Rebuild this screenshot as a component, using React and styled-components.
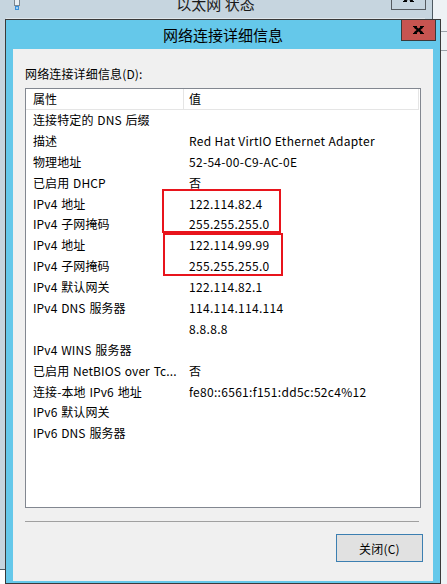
import React from "react";
import styled, { createGlobalStyle } from "styled-components";

const Global = createGlobalStyle`
  html, body { margin: 0; padding: 0; }
  body {
    width: 447px;
    height: 584px;
    overflow: hidden;
    background: #ffffff;
    font-family: "Noto Sans CJK SC", "Noto Sans", sans-serif;
    color: #000;
  }
  * { box-sizing: border-box; }
`;

const Desktop = styled.div`
  position: relative;
  width: 447px;
  height: 584px;
  overflow: hidden;
  background: #ffffff;
`;

const SideWindow = styled.div`
  position: absolute;
  left: 433px;
  top: 0;
  width: 14px;
  height: 584px;
  background: #eef2f5;
  display: flex;
  flex-direction: column;
  gap: 18px;
  padding-top: 31px;
`;

const SideLine = styled.div`
  height: 1px;
  background: #9aa3aa;
`;

const Window = styled.div`
  position: absolute;
  left: ${(p) => p.$x}px;
  top: ${(p) => p.$y}px;
  width: ${(p) => p.$w}px;
  height: ${(p) => p.$h}px;
  border: 1px solid ${(p) => (p.$active ? "#3a3a3a" : "#4e5a62")};
  background: ${(p) => (p.$active ? "#65c8ea" : "#c6d5df")};
  padding: 0 7px ${(p) => (p.$active ? 2 : 7)}px 7px;
  display: flex;
  flex-direction: column;
`;

const TitleBar = styled.div`
  height: 29px;
  flex: none;
  display: grid;
  grid-template-columns: 1fr auto 1fr;
  align-items: center;
`;

const AppIcon = styled.svg`
  justify-self: start;
  align-self: start;
  margin-left: 7px;
  margin-top: 10px;
`;

const Title = styled.div`
  grid-column: 2;
  font-size: 15px;
  line-height: 29px;
  white-space: nowrap;
  color: ${(p) => (p.$active ? "#000" : "#1a1a1a")};
`;

const CloseButton = styled.div`
  grid-column: 3;
  justify-self: end;
  align-self: start;
  width: 35px;
  height: 22px;
  margin-top: -1px;
  margin-right: ${(p) => (p.$active ? -3 : -1)}px;
  border: 1px solid ${(p) => (p.$active ? "#3a3a3a" : "#555b60")};
  background: ${(p) => (p.$active ? "#c75450" : "#c6d5df")};
  display: flex;
  align-items: center;
  justify-content: center;
`;

const Client = styled.div`
  flex: 1;
  background: #f0f0f0;
  display: flex;
  flex-direction: column;
  padding: 16px 12px 0 12px;
  border-top: 1px solid ${(p) => (p.$active ? "#f0f0f0" : "#dfe7ec")};
`;

const Label = styled.div`
  font-size: 12px;
  line-height: 16px;
  white-space: nowrap;
  letter-spacing: 0.15px;
`;

const ListBox = styled.div`
  position: relative;
  margin-top: 6px;
  height: 420px;
  border: 1px solid #828790;
  background: #ffffff;
  font-size: 12px;
`;

const HeaderRow = styled.div`
  display: grid;
  grid-template-columns: 158px 1fr;
  height: 21px;
  border-bottom: 1px solid #e5e5e5;
  margin-right: 1px;
`;

const HeaderCell = styled.div`
  line-height: 19px;
  padding-left: ${(p) => (p.$first ? 7 : 5)}px;
  border-right: 1px solid #e5e5e5;
`;

const Row = styled.div`
  display: grid;
  grid-template-columns: 158px 1fr;
  height: 20.9px;
  white-space: nowrap;
`;

const Cell = styled.div`
  line-height: 19px;
  padding-left: ${(p) => (p.$first ? 7 : 5)}px;
  overflow: hidden;
  letter-spacing: ${(p) => (p.$first ? 0.1 : 0.3)}px;
  word-spacing: ${(p) => (p.$first ? 1 : 0)}px;
`;

const Highlight = styled.div`
  position: absolute;
  border: 2px solid #e8141c;
  pointer-events: none;
`;

const Separator = styled.div`
  margin-top: 13px;
  height: 1px;
  width: 394px;
  background: #a0a0a0;
`;

const Button = styled.div`
  align-self: flex-end;
  margin-top: 12px;
  margin-right: -2px;
  width: 87px;
  height: 28px;
  border: 1px solid #3c7fb1;
  background: #e1e1e1;
  font-size: 12px;
  letter-spacing: 0.2px;
  display: flex;
  align-items: center;
  justify-content: center;
`;

const CloseGlyph = ({ y = 0 }) => (
  <svg width="11" height="8" viewBox="0 0 11 8" style={{ transform: `translateY(${y}px)` }}>
    <path d="M1.5 0.8 L9.5 7.2 M9.5 0.8 L1.5 7.2" stroke="#000" strokeWidth="2.2" fill="none" />
    <path d="M0 0.5 H4 M7 0.5 H11 M0 7.5 H4 M7 7.5 H11" stroke="#000" strokeWidth="1" />
  </svg>
);

const rows = [
  ["连接特定的 DNS 后缀", ""],
  ["描述", "Red Hat VirtIO Ethernet Adapter"],
  ["物理地址", "52-54-00-C9-AC-0E"],
  ["已启用 DHCP", "否"],
  ["IPv4 地址", "122.114.82.4"],
  ["IPv4 子网掩码", "255.255.255.0"],
  ["IPv4 地址", "122.114.99.99"],
  ["IPv4 子网掩码", "255.255.255.0"],
  ["IPv4 默认网关", "122.114.82.1"],
  ["IPv4 DNS 服务器", "114.114.114.114"],
  ["", "8.8.8.8"],
  ["IPv4 WINS 服务器", ""],
  ["已启用 NetBIOS over Tc...", "否"],
  ["连接-本地 IPv6 地址", "fe80::6561:f151:dd5c:52c4%12"],
  ["IPv6 默认网关", ""],
  ["IPv6 DNS 服务器", ""],
];

export default function App() {
  return (
    <Desktop>
      <Global />
      <SideWindow>
        <SideLine />
        <SideLine />
      </SideWindow>

      <Window $x={-2} $y={-12} $w={435} $h={582}>
        <TitleBar>
          <AppIcon width="8" height="12" viewBox="0 0 8 12">
            <rect x="1.5" y="0.5" width="5" height="6" fill="#e8eef2" stroke="#7d8790" />
            <rect x="2" y="7" width="4" height="4" fill="#3a8fd8" />
            <rect x="3" y="8" width="2" height="2" fill="#9fd0f5" />
          </AppIcon>
          <Title>以太网 状态</Title>
          <CloseButton>
            <CloseGlyph y={-1} />
          </CloseButton>
        </TitleBar>
        <Client />
      </Window>

      <Window $active $x={5} $y={19} $w={436} $h={565}>
        <TitleBar>
          <Title $active>网络连接详细信息</Title>
          <CloseButton $active>
            <CloseGlyph />
          </CloseButton>
        </TitleBar>
        <Client $active>
          <Label>网络连接详细信息(D):</Label>
          <ListBox>
            <HeaderRow>
              <HeaderCell $first>属性</HeaderCell>
              <HeaderCell>值</HeaderCell>
            </HeaderRow>
            {rows.map(([k, v], i) => (
              <Row key={i}>
                <Cell $first>{k}</Cell>
                <Cell>{v}</Cell>
              </Row>
            ))}
            <Highlight style={{ left: 136, top: 100, width: 119, height: 44 }} />
            <Highlight style={{ left: 137, top: 144, width: 120, height: 43 }} />
          </ListBox>
          <Separator />
          <Button>关闭(C)</Button>
        </Client>
      </Window>
    </Desktop>
  );
}
